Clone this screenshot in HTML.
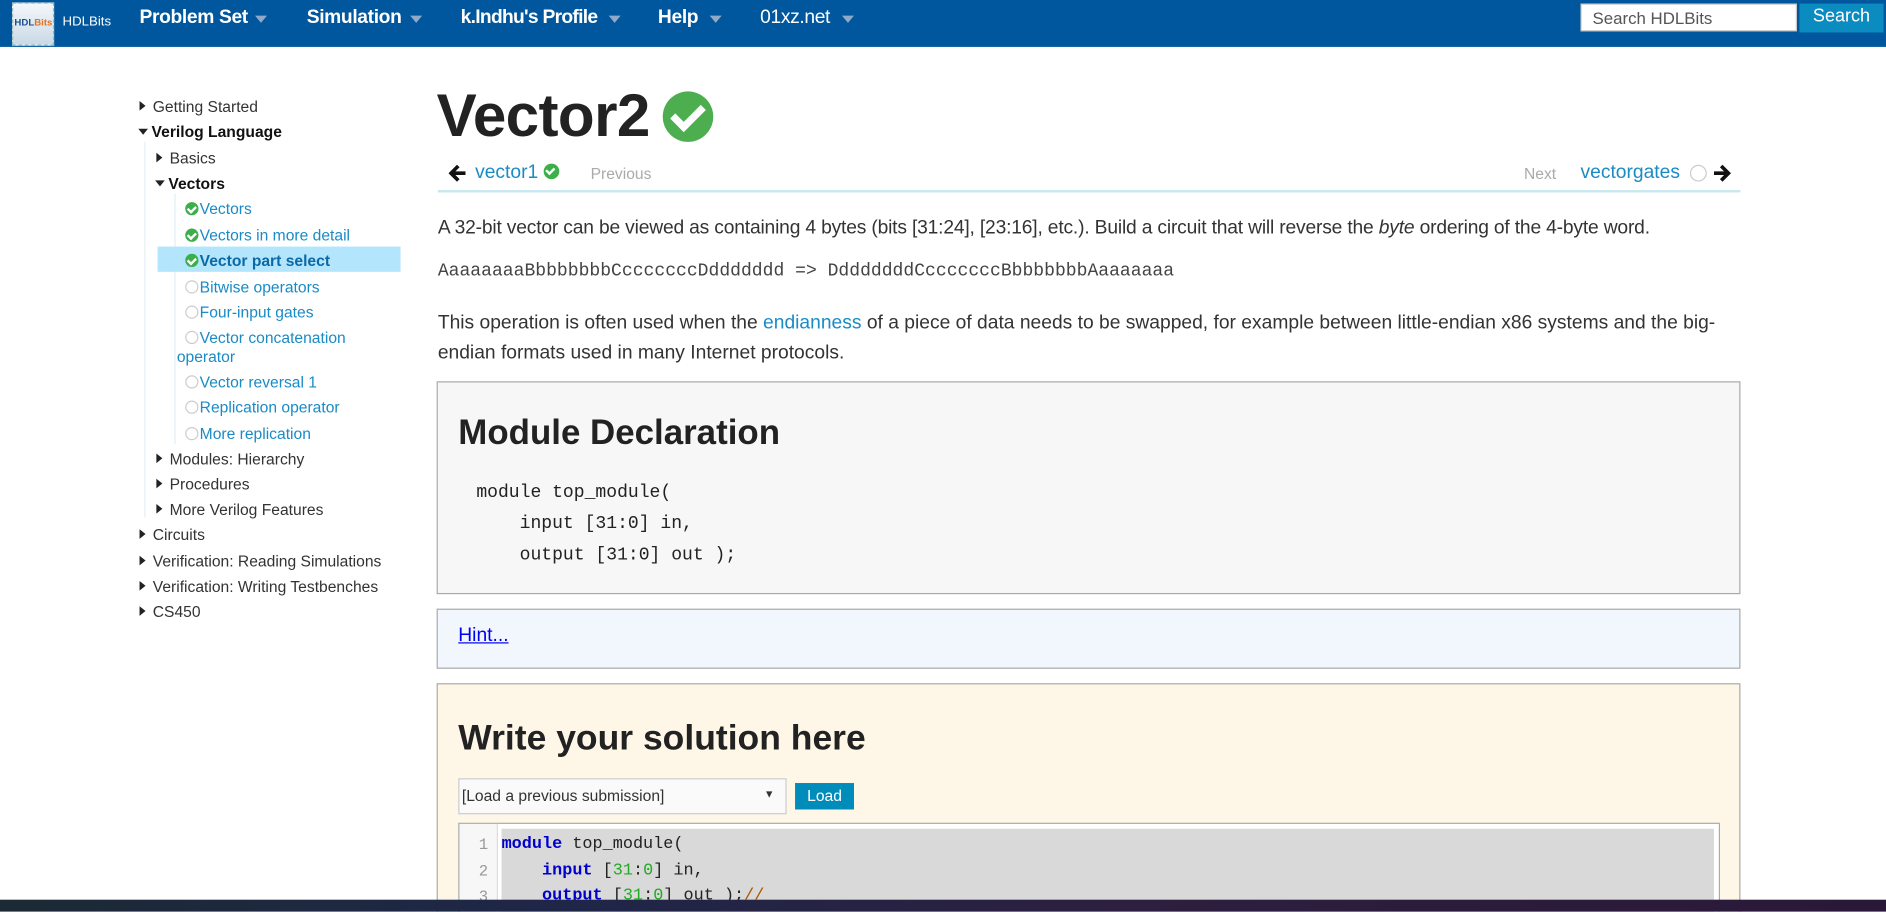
<!DOCTYPE html>
<html><head><meta charset="utf-8">
<style>
html,body{margin:0;padding:0;width:1886px;height:912px;overflow:hidden;background:#fff}
#w{position:absolute;left:0;top:0;width:1568px;height:758px;overflow:hidden;transform:scale(1.20281);transform-origin:0 0;font-family:"Liberation Sans",sans-serif;color:#222}
.a{position:absolute;white-space:nowrap}
.nav{position:absolute;left:0;top:0;width:1568px;height:39px;background:#00579d}
.m{position:absolute;top:6px;color:#fff;font-size:16px;font-weight:bold;letter-spacing:-0.3px}
.c{position:absolute;top:13px;width:0;height:0;border-left:5px solid transparent;border-right:5px solid transparent;border-top:6px solid #8fa9c8}
.sb{position:absolute;font-size:13px;color:#333;white-space:nowrap}
.tr{display:inline-block;width:0;height:0;border-top:4px solid transparent;border-bottom:4px solid transparent;border-left:5px solid #222;margin-right:6px;vertical-align:1px}
.td{display:inline-block;width:0;height:0;border-left:4px solid transparent;border-right:4px solid transparent;border-top:5px solid #222;margin-right:3px;vertical-align:2px}
.lk{color:#1a8bc5}
.ok{display:inline-block;width:11px;height:11px;border-radius:50%;background:#3cae4a;vertical-align:-1px;margin-right:1px;position:relative}
.ok:after{content:"";position:absolute;left:3px;top:2px;width:3px;height:5px;border:solid #fff;border-width:0 2px 2px 0;transform:rotate(45deg)}
.no{display:inline-block;width:9px;height:9px;border-radius:50%;border:1px solid #ccc;vertical-align:-1px;margin-right:1px}
.mono{font-family:"Liberation Mono",monospace}
</style></head><body><div id="w">
<div class="nav"></div>
<div class="a" style="left:10px;top:2px;width:33px;height:34px;background:linear-gradient(#f4f7fa,#c9d9e6);border:1px dashed #9bb"></div>
<div class="a" style="left:12px;top:14px;font-size:8px;font-weight:bold;color:#1b4f92">HDL<span style="color:#e67021">Bits</span></div>
<div class="a" style="left:52px;top:12px;font-size:11px;color:#fff">HDLBits</div>
<div class="m" style="left:116px">Problem Set</div><div class="c" style="left:212px"></div>
<div class="m" style="left:255px">Simulation</div><div class="c" style="left:341px"></div>
<div class="m" style="left:383px;letter-spacing:-0.6px">k.Indhu's Profile</div><div class="c" style="left:506px"></div>
<div class="m" style="left:547px">Help</div><div class="c" style="left:590px"></div>
<div class="m" style="left:632px;font-weight:normal">01xz.net</div><div class="c" style="left:700px"></div>
<div class="a" style="left:1314px;top:3px;width:180px;height:23px;background:#fff;border:1px solid #ccc;box-sizing:border-box;font-size:14px;color:#555;padding:3px 0 0 9px">Search HDLBits</div>
<div class="a" style="left:1496px;top:3px;width:70px;height:24px;background:#0a8cc0;color:#fff;font-size:15px;text-align:center;line-height:22px">Search</div>

<div class="a" style="left:120px;top:118px;width:1px;height:312px;background:#e3eef5"></div>
<div class="a" style="left:145px;top:161px;width:1px;height:208px;background:#e3eef5"></div>
<div class="a" style="left:131px;top:205px;width:202px;height:21px;background:#b3e5fc"></div>
<div class="sb" style="left:116px;top:81px"><span class="tr"></span>Getting Started</div>
<div class="sb" style="left:115px;top:102px;font-weight:bold;color:#111"><span class="td"></span>Verilog Language</div>
<div class="sb" style="left:130px;top:124px"><span class="tr"></span>Basics</div>
<div class="sb" style="left:129px;top:145px;font-weight:bold;color:#111"><span class="td"></span>Vectors</div>
<div class="sb lk" style="left:154px;top:166px"><span class="ok"></span>Vectors</div>
<div class="sb lk" style="left:154px;top:188px"><span class="ok"></span>Vectors in more detail</div>
<div class="sb" style="left:154px;top:209px;font-weight:bold;color:#0b6aa6"><span class="ok"></span>Vector part select</div>
<div class="sb lk" style="left:154px;top:231px"><span class="no"></span>Bitwise operators</div>
<div class="sb lk" style="left:154px;top:252px"><span class="no"></span>Four-input gates</div>
<div class="sb lk" style="left:154px;top:273px"><span class="no"></span>Vector concatenation</div>
<div class="sb lk" style="left:147px;top:289px">operator</div>
<div class="sb lk" style="left:154px;top:310px"><span class="no"></span>Vector reversal 1</div>
<div class="sb lk" style="left:154px;top:331px"><span class="no"></span>Replication operator</div>
<div class="sb lk" style="left:154px;top:353px"><span class="no"></span>More replication</div>
<div class="sb" style="left:130px;top:374px"><span class="tr"></span>Modules: Hierarchy</div>
<div class="sb" style="left:130px;top:395px"><span class="tr"></span>Procedures</div>
<div class="sb" style="left:130px;top:416px"><span class="tr"></span>More Verilog Features</div>
<div class="sb" style="left:116px;top:437px"><span class="tr"></span>Circuits</div>
<div class="sb" style="left:116px;top:459px"><span class="tr"></span>Verification: Reading Simulations</div>
<div class="sb" style="left:116px;top:480px"><span class="tr"></span>Verification: Writing Testbenches</div>
<div class="sb" style="left:116px;top:501px"><span class="tr"></span>CS450</div>

<div class="a" style="left:363px;top:67px;font-size:50px;font-weight:bold;color:#222;letter-spacing:-0.5px">Vector2</div>
<div class="a" style="left:551px;top:76px;width:42px;height:42px;border-radius:50%;background:#4cae4f"></div>
<div class="a" style="left:564px;top:82px;width:10px;height:20px;border:solid #fff;border-width:0 6px 6px 0;transform:rotate(45deg)"></div>

<svg class="a" style="left:372px;top:136px" width="16" height="16" viewBox="0 0 16 16"><path d="M3 8h12M9 2L3 8l6 6" stroke="#111" stroke-width="3" fill="none"/></svg>
<div class="a lk" style="left:395px;top:135px;font-size:16px">vector1 <span class="ok" style="width:13px;height:13px"></span></div>
<div class="a" style="left:491px;top:137px;font-size:13px;color:#aaa">Previous</div>
<div class="a" style="left:1267px;top:137px;font-size:13px;color:#aaa">Next</div>
<div class="a lk" style="left:1314px;top:135px;font-size:16px">vectorgates</div>
<div class="a" style="left:1405px;top:137px;width:12px;height:12px;border-radius:50%;border:1px solid #ccc"></div>
<svg class="a" style="left:1424px;top:136px" width="16" height="16" viewBox="0 0 16 16"><path d="M1 8h12M7 2l6 6-6 6" stroke="#111" stroke-width="3" fill="none"/></svg>
<div class="a" style="left:364px;top:158px;width:1083px;height:2px;background:#c8e8ee"></div>

<div class="a" style="left:364px;top:181px;font-size:16px;letter-spacing:-0.15px;color:#333">A 32-bit vector can be viewed as containing 4 bytes (bits [31:24], [23:16], etc.). Build a circuit that will reverse the <i>byte</i> ordering of the 4-byte word.</div>
<div class="a mono" style="left:364px;top:217px;font-size:15px;color:#444">AaaaaaaaBbbbbbbbCcccccccDddddddd =&gt; DdddddddCcccccccBbbbbbbbAaaaaaaa</div>
<div class="a" style="left:364px;top:260px;font-size:16px;color:#333">This operation is often used when the <span class="lk">endianness</span> of a piece of data needs to be swapped, for example between little-endian x86 systems and the big-</div>
<div class="a" style="left:364px;top:285px;font-size:16px;color:#333">endian formats used in many Internet protocols.</div>

<div class="a" style="left:363px;top:317px;width:1084px;height:177px;background:#f7f7f7;border:1px solid #aaa;box-sizing:border-box"></div>
<div class="a" style="left:381px;top:344px;font-size:29px;font-weight:bold;color:#222">Module Declaration</div>
<div class="a mono" style="left:396px;top:397px;font-size:15px;line-height:26px;color:#222;white-space:pre">module top_module(
    input [31:0] in,
    output [31:0] out );</div>

<div class="a" style="left:363px;top:506px;width:1084px;height:50px;background:#f2f7fe;border:1px solid #aaa;box-sizing:border-box"></div>
<div class="a" style="left:381px;top:520px;font-size:16px;color:#00e;text-decoration:underline">Hint...</div>

<div class="a" style="left:363px;top:568px;width:1084px;height:200px;background:#fef7e7;border:1px solid #aaa;box-sizing:border-box"></div>
<div class="a" style="left:381px;top:597px;font-size:29.5px;font-weight:bold;color:#222">Write your solution here</div>
<div class="a" style="left:381px;top:647px;width:273px;height:30px;background:#fafafa;border:1px solid #ccc;box-sizing:border-box;font-size:13px;color:#333;padding:6px 0 0 2px">[Load a previous submission]<span style="position:absolute;right:9px;top:7px;font-size:9px">▼</span></div>
<div class="a" style="left:661px;top:651px;width:49px;height:22px;background:#008cba;color:#fff;font-size:13px;text-align:center;line-height:22px">Load</div>
<div class="a" style="left:381px;top:684px;width:1049px;height:80px;background:#fff;border:1px solid #aaa;box-sizing:border-box"></div>
<div class="a" style="left:382px;top:685px;width:31px;height:70px;background:#f7f7f7;border-right:1px solid #ddd"></div>
<div class="a" style="left:417px;top:689px;width:1008px;height:70px;background:#d9d9d9"></div>
<div class="a mono" style="left:398px;top:692px;font-size:13px;line-height:21.5px;color:#999;white-space:pre">1
2
3</div>
<div class="a mono" style="left:417px;top:692px;font-size:14px;line-height:21.5px;color:#222;white-space:pre"><b style="color:#00c">module</b> top_module(
    <b style="color:#00c">input</b> [<span style="color:#2a2">31</span>:<span style="color:#2a2">0</span>] in,
    <b style="color:#00c">output</b> [<span style="color:#2a2">31</span>:<span style="color:#2a2">0</span>] out );<span style="color:#a50">//</span></div>
<div class="a" style="left:0;top:748px;width:1568px;height:10px;background:linear-gradient(90deg,#1c2a35,#1f2648 30%,#2d1f3f 60%,#2a1838)"></div>
</div></body></html>
